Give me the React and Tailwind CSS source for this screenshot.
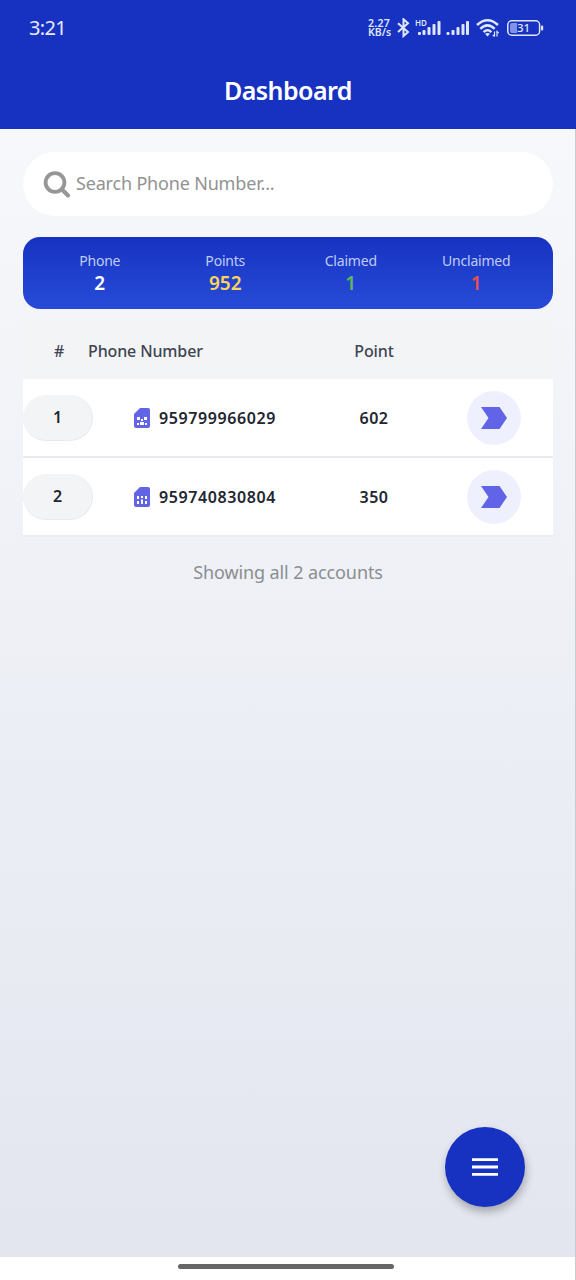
import React from "react";

function StatusIcons() {
  return (
    <div className="flex items-center text-[#dfe6ff]">
      <div className="mr-[5px] w-[24px] text-[10.5px] leading-[9px] font-semibold">
        <span className="tracking-[0.3px]">2.27</span>
        <br />
        KB/s
      </div>
      <svg width="13" height="20" viewBox="0 0 13 20" fill="none" stroke="currentColor" strokeWidth="2">
        <path d="M1 5.2 L11 14 L6.5 18 V1.200 L11 5.200 L1 14" />
      </svg>
      <svg className="ml-[5px]" width="54" height="20" viewBox="0 0 54 20" fill="currentColor">
        <text x="0" y="7.5" fontSize="8" fontWeight="600">HD</text>
        <rect x="3" y="14" width="3" height="3" rx="1" />
        <rect x="7.5" y="12" width="3" height="5" rx="1" />
        <rect x="12.5" y="9" width="3" height="8" rx="1" />
        <rect x="17.5" y="6" width="3" height="11" rx="1" />
        <rect x="22.5" y="3" width="3" height="14" rx="1" />
        <rect x="31.500" y="14" width="3" height="3" rx="1" />
        <rect x="36.500" y="12" width="3" height="5" rx="1" />
        <rect x="41.500" y="9" width="3" height="8" rx="1" />
        <rect x="46.500" y="6" width="3" height="11" rx="1" />
        <rect x="51" y="3" width="3" height="14" rx="1" />
      </svg>
      <svg className="ml-[7px]" width="24" height="20" viewBox="0 0 24 20" fill="none" stroke="currentColor" strokeWidth="2.5">
        <path d="M1 7 Q11.500 -2.500 22 7" />
        <path d="M4.300 10.800 Q11.500 4 18.700 10.800" />
        <path d="M7.600 14.200 Q11.500 10.400 15.400 14.200" />
        <path d="M9 15.800Q11.500 14 14 15.800L11.500 18.500z" fill="currentColor" stroke="none" />
        <path d="M18.500 13.500v5M16.800 16.800l1.700 1.700M21 18.500v-5l1.700 1.700" strokeWidth="1.200" />
      </svg>
      <svg className="ml-[7px]" width="37" height="16" viewBox="0 0 37 16">
        <rect x="0.800" y="0.800" width="31.800" height="14.400" rx="4" fill="none" stroke="currentColor" strokeWidth="1.500" />
        <path d="M5 3h5v10H5q-2 0-2-2V5q0-2 2-2z" fill="#8193e6" />
        <rect x="34" y="5.500" width="2.200" height="5" rx="1" fill="currentColor" />
        <text x="16.500" y="12.200" fontSize="11.500" fontWeight="500" textAnchor="middle" fill="currentColor">31</text>
      </svg>
    </div>
  );
}

const stats = [
  { label: "Phone", value: "2", color: "text-white" },
  { label: "Points", value: "952", color: "text-[#ffd25c]" },
  { label: "Claimed", value: "1", color: "text-[#5fb765]" },
  { label: "Unclaimed", value: "1", color: "text-[#e8504f]" },
];

const rows = [
  { id: 1, phone: "959799966029", point: 602 },
  { id: 2, phone: "959740830804", point: 350 },
];

function Sim({ alt }) {
  return (
    <svg width="16" height="20" viewBox="0 0 16 20">
      <path d="M6 0H14Q16 0 16 2V18Q16 20 14 20H2Q0 20 0 18V6Z" fill="#6264e6" />
      {alt ? (
        <path d="M3 9h2v3H3zM3 14h2v3H3zM7 9h2v2H7zM7 12.500h2V17H7zM11 9h2v3h-2zM11 14h2v3h-2z" fill="#fff" />
      ) : (
        <path d="M3 9h3v3H3zM3 15h2v2H3zM7 11h2v2H7zM10 9h3v3h-3zM6 14h4v3H6zM11 15h2v2h-2z" fill="#fff" />
      )}
    </svg>
  );
}

export default function App() {
  return (
    <div className="relative flex h-[1280px] w-[576px] flex-col overflow-hidden bg-white font-['Noto_Sans',sans-serif]">
      <header className="h-[129px] shrink-0 bg-[#1732c1]">
        <div className="flex h-[55px] items-center justify-between pr-[32px] pl-[29px]">
          <span className="text-[20px] tracking-[-0.700px] text-[#e6ebff]">3:21</span>
          <StatusIcons />
        </div>
        <h1 className="pt-[17px] text-center text-[25px] leading-[36px] font-semibold tracking-[-0.550px] text-white">Dashboard</h1>
      </header>
      <main className="flex h-[1128px] shrink-0 flex-col bg-linear-to-b from-[#f6f8fb] to-[#e3e6ef] px-[23px] pt-[23px]">
        <div className="flex h-[64px] shrink-0 items-center rounded-full bg-white pl-[20px]">
          <svg width="28" height="28" viewBox="0 0 28 28" fill="none" stroke="#969696" strokeLinecap="round">
            <circle cx="12" cy="12.500" r="9.400" strokeWidth="3.800" />
            <path d="M19 19.500l6 6" strokeWidth="4" />
          </svg>
          <span className="-mt-px ml-[5px] text-[18px] tracking-[-0.180px] text-[#929292]">Search Phone Number...</span>
        </div>
        <section className="mt-[21px] flex h-[72px] shrink-0 rounded-[17px] bg-linear-to-b from-[#1732c1] to-[#274bd8] px-[14px] pt-[14px]">
          {stats.map((s) => (
            <div key={s.label} className="flex flex-1 flex-col items-center">
              <span className="text-[14px] leading-[20px] tracking-[-0.200px] text-[#c0cbf5]">{s.label}</span>
              <span className={"text-[19px] leading-[24px] font-semibold " + s.color}>{s.value}</span>
            </div>
          ))}
        </section>
        <section className="mt-[13px] text-[16px]">
          <div className="flex h-[57px] items-center bg-[#f2f4f5] font-medium tracking-[-0.130px] text-[#3f4453]">
            <span className="w-[65px] pl-[31px]">#</span>
            <span className="w-[220px]">Phone Number</span>
            <span className="w-[132px] text-center">Point</span>
          </div>
          {rows.map((r) => (
            <div key={r.id} className="flex h-[79px] items-center border-b-2 border-[#e9ebef] bg-white font-semibold text-[#22262f]">
              <div className="flex h-[46px] w-[70px] items-center justify-center rounded-full border-r border-b border-[#e8eaed] bg-[#f2f4f6]">{r.id}</div>
              <div className="ml-[41px] flex w-[174px] items-center gap-[9px]">
                <Sim alt={r.id === 2} />
                <span className="tracking-[0.600px]">{r.phone}</span>
              </div>
              <span className="w-[132px] text-center tracking-[0.500px]">{r.point}</span>
              <div className="ml-[27px] flex size-[54px] items-center justify-center rounded-full bg-[#eef0fd]">
                <svg width="26" height="22" viewBox="0 0 26 22">
                  <path d="M0 0H18.500L26 11L18.500 22H0L7.500 11Z" fill="#6264e8" />
                </svg>
              </div>
            </div>
          ))}
        </section>
        <p className="mt-[21px] text-center text-[18px] leading-[28px] tracking-[-0.100px] text-[#8b8e90]">Showing all 2 accounts</p>
      </main>
      <footer className="flex flex-1 justify-center pt-[7px] pr-[4px]">
        <div className="h-[5px] w-[216px] rounded-full bg-[#666]" />
      </footer>
      <button aria-label="Menu" className="absolute top-[1127px] left-[445px] flex size-[80px] items-center justify-center rounded-full bg-[#1732c1] shadow-[1px_5px_8px_rgba(0,0,0,0.28)]">
        <svg width="26" height="18" viewBox="0 0 26 18" fill="#fff">
          <path d="M0 0.200h26v2.800H0zM0 7.600h26v2.800H0zM0 15h26v2.800H0z" />
        </svg>
      </button>
      <div className="absolute top-[129px] right-0 h-[1151px] w-px bg-[#c9cbd3]" />
    </div>
  );
}
